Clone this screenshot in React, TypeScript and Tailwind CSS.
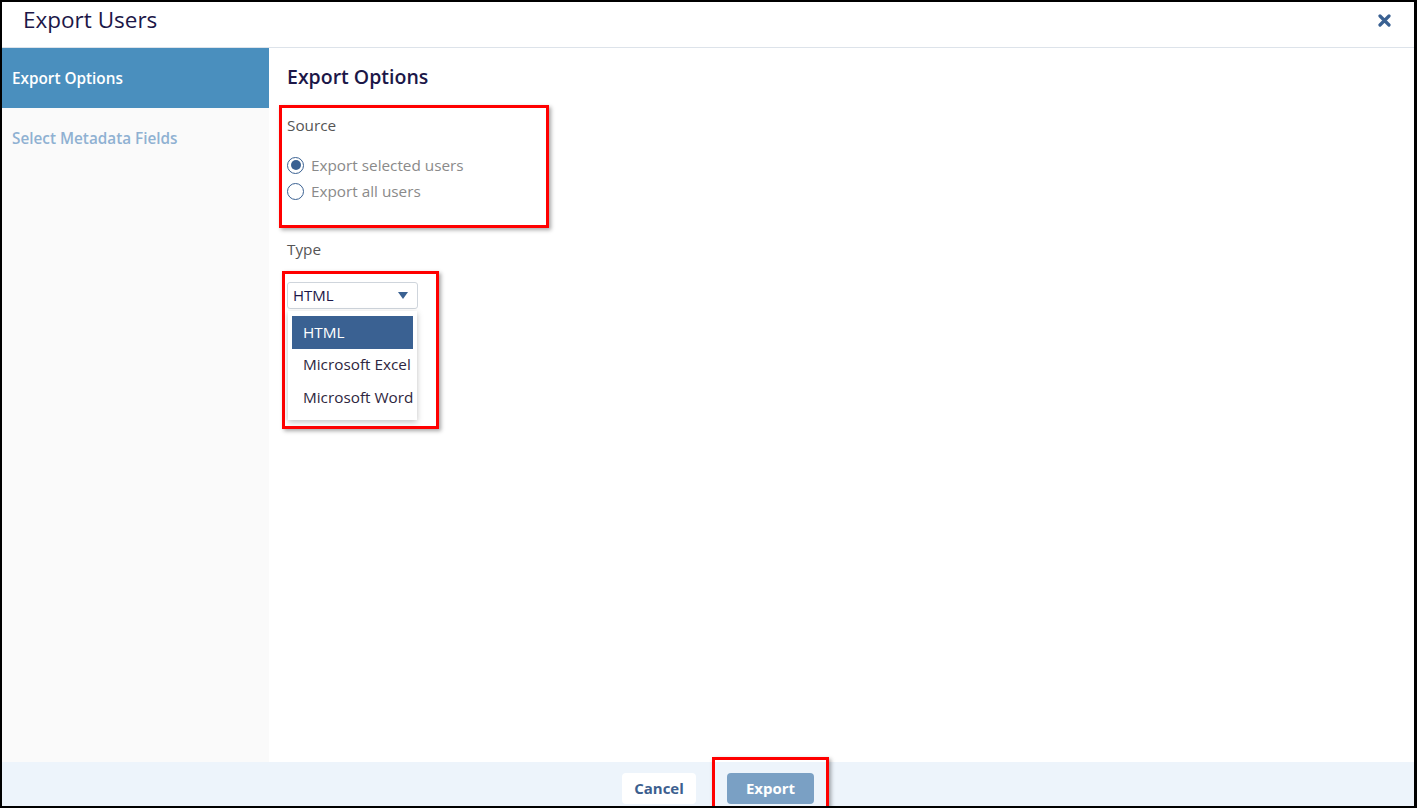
import React, { useState } from 'react'

const FONT = "font-['Open_Sans','Noto_Sans',sans-serif]"

const types = ['HTML', 'Microsoft Excel', 'Microsoft Word']

const CloseIcon = () => (
  <svg width="13" height="13" viewBox="0 0 13 13">
    <path d="M2 2 L11 11 M11 2 L2 11" stroke="#3a6192" strokeWidth="3.2" strokeLinecap="round" />
  </svg>
)

const Radio = ({ checked, label, onClick }: { checked: boolean; label: string; onClick: () => void }) => (
  <label className="h-[20px] flex items-center gap-[7px] cursor-pointer" onClick={onClick}>
    <span className="w-[17px] h-[17px] rounded-full border border-[#3a6192] bg-white flex items-center justify-center">
      {checked && <span className="w-[10px] h-[10px] rounded-full bg-[#3a6192]" />}
    </span>
    <span className="text-[15.3px] text-[#8a8a8a]">{label}</span>
  </label>
)

const App = () => {
  const [source, setSource] = useState('selected')
  const [type, setType] = useState('HTML')

  return (
    <div className={`${FONT} w-[1417px] h-[808px] border-l-2 border-t-2 border-b-2 border-r-[3px] border-black bg-white flex flex-col overflow-hidden`}>
      {/* Header */}
      <div className="h-[46px] shrink-0 flex items-center justify-between pl-[21px] pr-[23px] pb-[8px] border-b border-[#dde3ea]">
        <h1 className="text-[22.5px] text-[#1c1748] leading-none">Export Users</h1>
        <button><CloseIcon /></button>
      </div>

      {/* Body */}
      <div className="flex-1 flex min-h-0">
        {/* Sidebar */}
        <div className="w-[267px] shrink-0 bg-[#fafafa]">
          <div className="h-[60px] bg-[#4a8fbe] flex items-center pl-[10px] text-[15.3px] font-semibold text-white">
            Export Options
          </div>
          <div className="h-[60px] flex items-center pl-[10px] text-[15.3px] font-semibold text-[#8fb1d2]">
            Select Metadata Fields
          </div>
        </div>

        {/* Main */}
        <div className="flex-1 pl-[10px] pt-[16px]">
          <h2 className="pl-[8px] text-[19.5px] font-semibold text-[#1c1748] leading-[26px]">Export Options</h2>

          <div className="mt-[15px] w-[270px] h-[123px] border-[3px] border-[#f00] shadow-[2px_2px_4px_rgba(0,0,0,0.35)] pl-[5px] pt-[7px]">
            <div className="text-[15.3px] text-[#555] leading-[20px]">Source</div>
            <div className="mt-[20px] flex flex-col gap-[6px]">
              <Radio checked={source === 'selected'} label="Export selected users" onClick={() => setSource('selected')} />
              <Radio checked={source === 'all'} label="Export all users" onClick={() => setSource('all')} />
            </div>
          </div>

          <div className="pl-[8px] mt-[11px] text-[15.3px] text-[#555] leading-[20px]">Type</div>

          <div className="ml-[3px] mt-[12px] w-[157px] h-[158px] border-[3px] border-[#f00] shadow-[2px_2px_4px_rgba(0,0,0,0.35)] pl-[2px] pt-[8px]">
            <div className="w-[131px] h-[27px] rounded-[3px] border border-[#cfd5dc] bg-white flex items-center justify-between pl-[5px] pr-[9px] text-[15px] text-[#1c1748]">
              <span>{type}</span>
              <svg width="10" height="7" viewBox="0 0 10 7"><path d="M0 0 H10 L5 7 Z" fill="#3a6192" /></svg>
            </div>
            <div className="mt-[2px] ml-[1px] w-[129px] bg-white shadow-[0_2px_6px_rgba(0,0,0,0.25)] pt-[5px] pb-[6px] px-[4px]">
              {types.map(t => (
                <div
                  key={t}
                  onClick={() => setType(t)}
                  className={`h-[32.5px] flex items-center pl-[11px] text-[15.3px] whitespace-nowrap cursor-pointer ${
                    t === type ? 'bg-[#3a6192] text-white' : 'text-[#2e2640]'
                  }`}
                >
                  {t}
                </div>
              ))}
            </div>
          </div>
        </div>
      </div>

      {/* Footer */}
      <div className="h-[44px] shrink-0 bg-[#edf4fb] flex items-start justify-center gap-[31px] pt-[11px] pl-[20px]">
        <button className="w-[74px] h-[31px] rounded-[4px] bg-white text-[15px] font-bold text-[#3d5f8f]">Cancel</button>
        <div className="relative">
          <button className="w-[87px] h-[31px] rounded-[4px] bg-[#7aa0c4] text-[15px] font-bold text-white">Export</button>
          <span className="absolute -left-[15px] -right-[15px] -top-[16px] -bottom-[6px] border-[3px] border-[#f00] shadow-[2px_2px_4px_rgba(0,0,0,0.35)] pointer-events-none" />
        </div>
      </div>
    </div>
  )
}

export default App
